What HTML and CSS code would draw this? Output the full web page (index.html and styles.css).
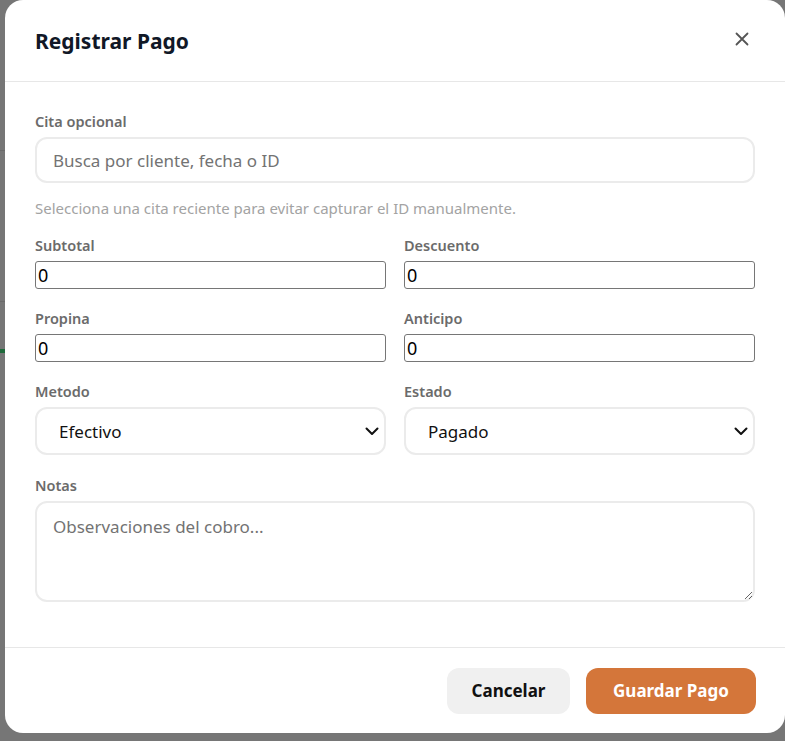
FILE: index.html
```html
<!DOCTYPE html>
<html lang="es">
<head>
  <meta charset="UTF-8" />
  <meta name="viewport" content="width=device-width, initial-scale=1.0"/>
  <title>Registrar Pago</title>
  <link rel="stylesheet" href="styles.css">
</head>
<body>

  <div class="backdrop">
    <div class="page-bits">
      <div class="bit-line"></div>
      <div class="bit-line"></div>
      <div class="bit-green"></div>
    </div>

    <div class="modal">
      <div class="modal-head">
        <h2>Registrar Pago</h2>
        <button class="close-btn" aria-label="Cerrar">
          <svg width="14" height="14" viewBox="0 0 14 14">
            <path d="M1.5 1.5 L12.5 12.5 M12.5 1.5 L1.5 12.5" stroke="#555" stroke-width="1.8" stroke-linecap="round"/>
          </svg>
        </button>
      </div>

      <div class="modal-body">
        <div class="field">
          <label>Cita opcional</label>
          <input type="text" class="soft-input" placeholder="Busca por cliente, fecha o ID">
          <p class="hint">Selecciona una cita reciente para evitar capturar el ID manualmente.</p>
        </div>

        <div class="grid">
          <div class="field">
            <label>Subtotal</label>
            <input type="number" class="num-input" value="0">
          </div>
          <div class="field">
            <label>Descuento</label>
            <input type="number" class="num-input" value="0">
          </div>
          <div class="field">
            <label>Propina</label>
            <input type="number" class="num-input" value="0">
          </div>
          <div class="field">
            <label>Anticipo</label>
            <input type="number" class="num-input" value="0">
          </div>
          <div class="field">
            <label>Metodo</label>
            <div class="select-wrap">
              <select class="soft-select">
                <option>Efectivo</option>
                <option>Tarjeta</option>
                <option>Transferencia</option>
              </select>
              <svg class="chevron" width="14" height="9" viewBox="0 0 14 9">
                <path d="M1.5 1.5 L7 7 L12.5 1.5" fill="none" stroke="#111" stroke-width="2" stroke-linecap="round" stroke-linejoin="round"/>
              </svg>
            </div>
          </div>
          <div class="field">
            <label>Estado</label>
            <div class="select-wrap">
              <select class="soft-select">
                <option>Pagado</option>
                <option>Pendiente</option>
              </select>
              <svg class="chevron" width="14" height="9" viewBox="0 0 14 9">
                <path d="M1.5 1.5 L7 7 L12.5 1.5" fill="none" stroke="#111" stroke-width="2" stroke-linecap="round" stroke-linejoin="round"/>
              </svg>
            </div>
          </div>
        </div>

        <div class="field notes">
          <label>Notas</label>
          <textarea class="soft-area" placeholder="Observaciones del cobro..."></textarea>
        </div>
      </div>

      <div class="modal-foot">
        <button class="btn btn-cancel">Cancelar</button>
        <button class="btn btn-save">Guardar Pago</button>
      </div>
    </div>
  </div>

</body>
</html>
```

FILE: styles.css
```css
* {
  box-sizing: border-box;
}

body {
  margin: 0;
  font-family: 'Noto Sans', 'Open Sans', sans-serif;
  background: #767676;
  color: #111827;
  overflow: hidden;
}

.backdrop {
  position: relative;
  min-height: 741px;
  background: #767676;
}

/* dimmed page peeking out on the left */
.page-bits {
  position: absolute;
  left: 0;
  top: 0;
  width: 6px;
  height: 741px;
}

.bit-line {
  height: 1px;
  background: #6a6a6a;
  margin-top: 150px;
}

.bit-green {
  margin-top: 47px;
  height: 4px;
  background: #1f6a3b;
}

.modal {
  position: relative;
  width: 780px;
  height: 733px;
  margin-left: 5px;
  background: #fff;
  border-radius: 18px;
  display: flex;
  flex-direction: column;
  overflow: hidden;
}

.modal-head {
  flex-shrink: 0;
  height: 82px;
  padding: 0 30px;
  display: flex;
  align-items: center;
  justify-content: space-between;
  border-bottom: 1px solid #e7e7e7;
}

.modal-head h2 {
  margin: 0;
  font-size: 21px;
  font-weight: 700;
  color: #111827;
}

.close-btn {
  background: none;
  border: none;
  padding: 0;
  margin-right: 6px;
  margin-top: -3px;
  width: 14px;
  height: 14px;
  cursor: pointer;
  display: flex;
}

.modal-body {
  flex: 1;
  padding: 29px 30px 0;
}

.field {
  display: flex;
  flex-direction: column;
}

.field label {
  font-size: 14.5px;
  font-weight: 600;
  line-height: 20px;
  color: #6b6b6b;
  margin-bottom: 6px;
}

.soft-input {
  height: 46px;
  border: 2px solid #ebebeb;
  border-radius: 12px;
  padding: 0 16px;
  font-family: inherit;
  font-size: 17px;
  color: #111;
  outline: none;
}

.soft-input::placeholder,
.soft-area::placeholder {
  color: #737373;
}

.hint {
  margin: 15px 0 0;
  font-size: 15px;
  line-height: 20px;
  color: #a3a3a3;
}

.grid {
  display: grid;
  grid-template-columns: 1fr 1fr;
  column-gap: 18px;
  row-gap: 19px;
  margin-top: 17px;
}

.num-input {
  height: 28px;
  border: 1px solid #767676;
  border-radius: 3px;
  padding: 1px 2px;
  font-family: inherit;
  font-size: 18px;
  color: #000;
  background: #fff;
  outline: none;
}

.num-input::-webkit-inner-spin-button,
.num-input::-webkit-outer-spin-button {
  -webkit-appearance: none;
  margin: 0;
}

.select-wrap {
  position: relative;
}

.soft-select {
  width: 100%;
  height: 48px;
  appearance: none;
  -webkit-appearance: none;
  border: 2px solid #ebebeb;
  border-radius: 12px;
  padding: 0 22px;
  font-family: inherit;
  font-size: 17px;
  color: #111;
  background: #fff;
  outline: none;
}

.chevron {
  position: absolute;
  right: 7px;
  top: 20px;
}

.notes {
  margin-top: 20px;
}

.soft-area {
  height: 101px;
  border: 2px solid #ebebeb;
  border-radius: 12px;
  padding: 12px 16px;
  font-family: inherit;
  font-size: 17px;
  color: #111;
  outline: none;
  resize: vertical;
}

.modal-foot {
  flex-shrink: 0;
  height: 86px;
  border-top: 1px solid #e7e7e7;
  padding: 0 29px 0 30px;
  display: flex;
  align-items: center;
  justify-content: flex-end;
  gap: 16px;
}

.btn {
  height: 46px;
  border: none;
  border-radius: 12px;
  font-family: inherit;
  font-size: 17px;
  font-weight: 700;
  cursor: pointer;
}

.btn-cancel {
  width: 123px;
  background: #f0f0f0;
  color: #111;
}

.btn-save {
  width: 170px;
  background: #d4763a;
  color: #fff;
}
```
